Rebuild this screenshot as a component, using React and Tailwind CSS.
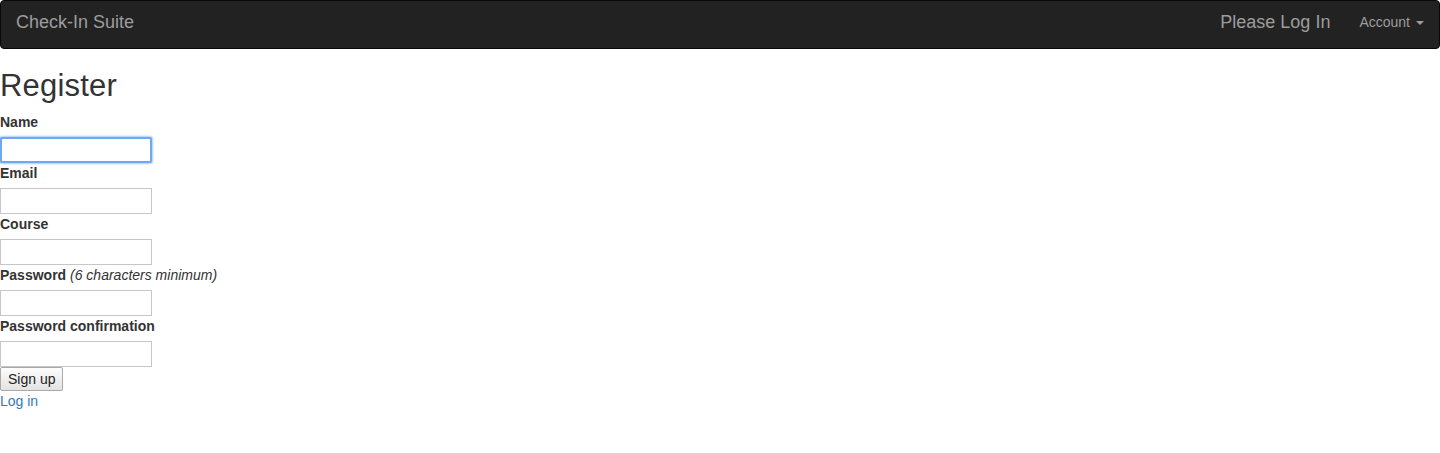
import React from 'react';

const Field = ({ label, hint, focused }) => (
  <>
    <div>
      <label className="inline-block mb-[5px] font-bold leading-[20px]">
        {label}
        {hint && <i className="font-normal"> {hint}</i>}
      </label>
    </div>
    <div className="h-[26px]">
      <input
        type="text"
        className={
          focused
            ? 'block w-[152px] h-[26px] px-1 bg-white border-2 border-[#6fa8f0] rounded-[2px] shadow-[0_0_2px_1px_#a9cdf8] outline-none'
            : 'block w-[152px] h-[26px] px-1 bg-white border border-[#c6c6c6] outline-none'
        }
      />
    </div>
  </>
);

export default function App() {
  return (
    <div className="min-h-[453px] bg-white text-[14px] leading-[20px] text-[#333]" style={{ fontFamily: '"Liberation Sans", Arial, sans-serif' }}>
      {/* Navbar */}
      <nav className="h-[49px] bg-[#222] border border-[#080808] rounded-[4px] flex items-center justify-between">
        <a href="#" className="pl-[15px] text-[18px] leading-[20px] text-[#9d9d9d] -mt-[5px]">
          Check-In Suite
        </a>
        <div className="flex items-center -mt-[5px]">
          <span className="text-[18px] leading-[20px] text-[#9d9d9d] mr-[29px]">Please Log In</span>
          <a href="#" className="flex items-center text-[14px] text-[#9d9d9d] pr-[15px]">
            Account
            <span className="ml-[6px] mt-[2px] w-0 h-0 border-l-[4px] border-r-[4px] border-t-[4px] border-l-transparent border-r-transparent border-t-[#9d9d9d]" />
          </a>
        </div>
      </nav>

      {/* Form */}
      <h2 className="mt-[20px] mb-[10px] text-[31px] leading-[33px] font-normal tracking-[0.2px]">Register</h2>
      <form onSubmit={(e) => e.preventDefault()}>
        <Field label="Name" focused />
        <Field label="Email" />
        <Field label="Course" />
        <Field label="Password" hint="(6 characters minimum)" />
        <Field label="Password confirmation" />
        <div>
          <button
            type="submit"
            className="h-[24px] px-[7px] text-[14px] leading-[20px] text-[#222] border border-[#a9a9a9] rounded-[2px] bg-gradient-to-b from-[#fdfdfd] to-[#e3e3e3]"
          >
            Sign up
          </button>
        </div>
      </form>
      <a href="#" className="text-[#337ab7]">Log in</a>
    </div>
  );
}
